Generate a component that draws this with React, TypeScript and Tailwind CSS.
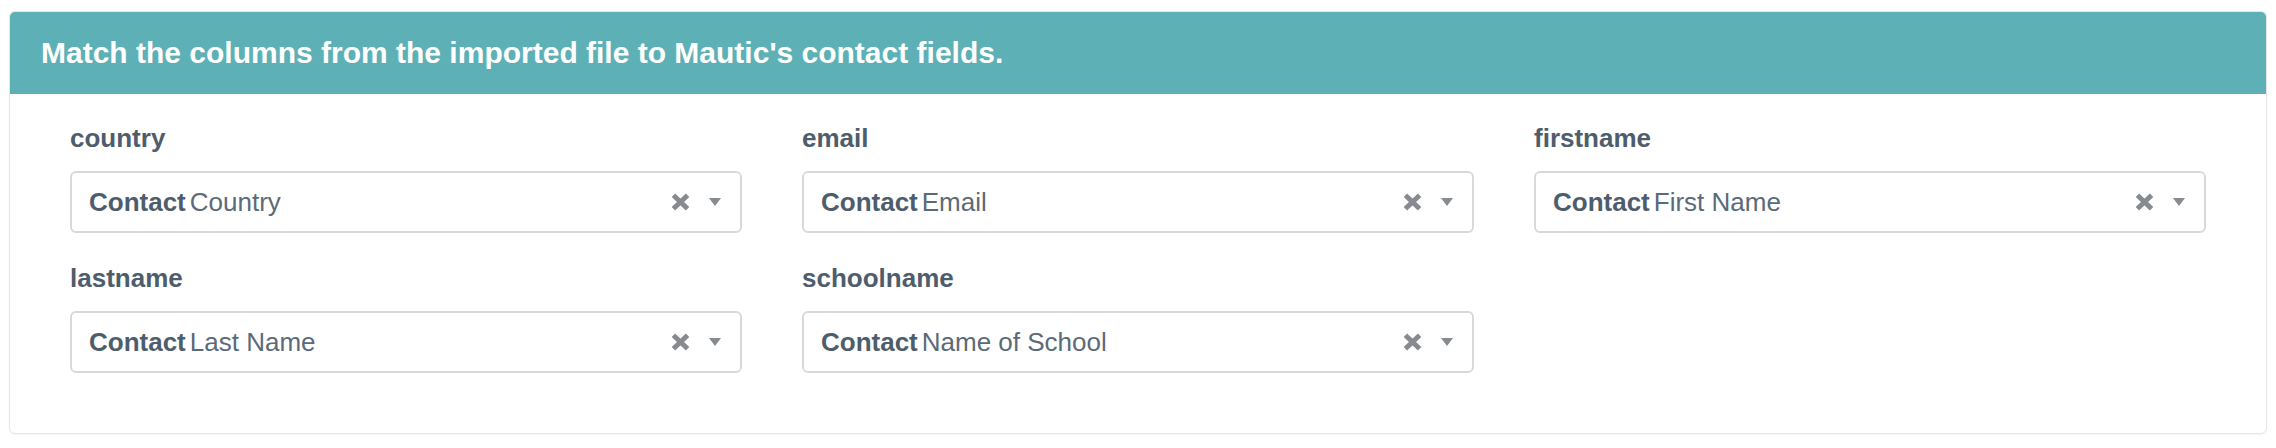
import React from "react";

type Field = { label: string; value: string };

const rows: Field[][] = [
  [
    { label: "country", value: "Country" },
    { label: "email", value: "Email" },
    { label: "firstname", value: "First Name" },
  ],
  [
    { label: "lastname", value: "Last Name" },
    { label: "schoolname", value: "Name of School" },
  ],
];

function ClearIcon() {
  return (
    <svg width="19" height="18" viewBox="0 0 19 18" className="block">
      <g stroke="#878b90" strokeWidth="5" strokeLinecap="butt">
        <line x1="2.4" y1="2.2" x2="16.6" y2="15.8" />
        <line x1="16.6" y1="2.2" x2="2.4" y2="15.8" />
      </g>
    </svg>
  );
}

function Caret() {
  return (
    <svg width="12" height="8" viewBox="0 0 12 8" className="block">
      <polygon points="0,0 12,0 6,8" fill="#878b90" />
    </svg>
  );
}

function FieldCell({ f }: { f: Field }) {
  return (
    <div className="flex flex-col pb-[27px]">
      <div className="text-[26px] leading-[37px] font-bold text-[#4e5d6c] mb-[14px]">{f.label}</div>
      <div className="h-[62px] rounded-[6px] border-2 border-[#d8d9da] bg-white flex items-center pl-[17px] pr-[19px]">
        <div className="flex-1 text-[26px] leading-none whitespace-nowrap">
          <span className="font-bold text-[#4e5d6c]">Contact</span>
          <span className="text-[#5b6a79] ml-[4px]">{f.value}</span>
        </div>
        <div className="flex items-center gap-[19px]">
          <ClearIcon />
          <Caret />
        </div>
      </div>
    </div>
  );
}

export default function App() {
  return (
    <div
      className="w-[2276px] h-[448px] bg-white pt-[11px] pl-[9px]"
      style={{ fontFamily: '"Liberation Sans", Arial, Helvetica, sans-serif' }}
    >
      <div className="w-[2258px] rounded-[6px] border border-[#e4e6ea] bg-white overflow-hidden shadow-[0_1px_2px_rgba(0,0,0,0.04)]">
        <div className="h-[82px] bg-[#5db1b6] flex items-center pl-[31px]">
          <h3 className="text-[30px] font-bold text-white leading-none">
            Match the columns from the imported file to Mautic's contact fields.
          </h3>
        </div>
        <div className="px-[60px] pt-[26px] pb-[33px] flex flex-col">
          {rows.map((row, i) => (
            <div key={i} className="grid grid-cols-3 gap-x-[60px]">
              {row.map((f) => (
                <FieldCell key={f.label} f={f} />
              ))}
            </div>
          ))}
        </div>
      </div>
    </div>
  );
}
